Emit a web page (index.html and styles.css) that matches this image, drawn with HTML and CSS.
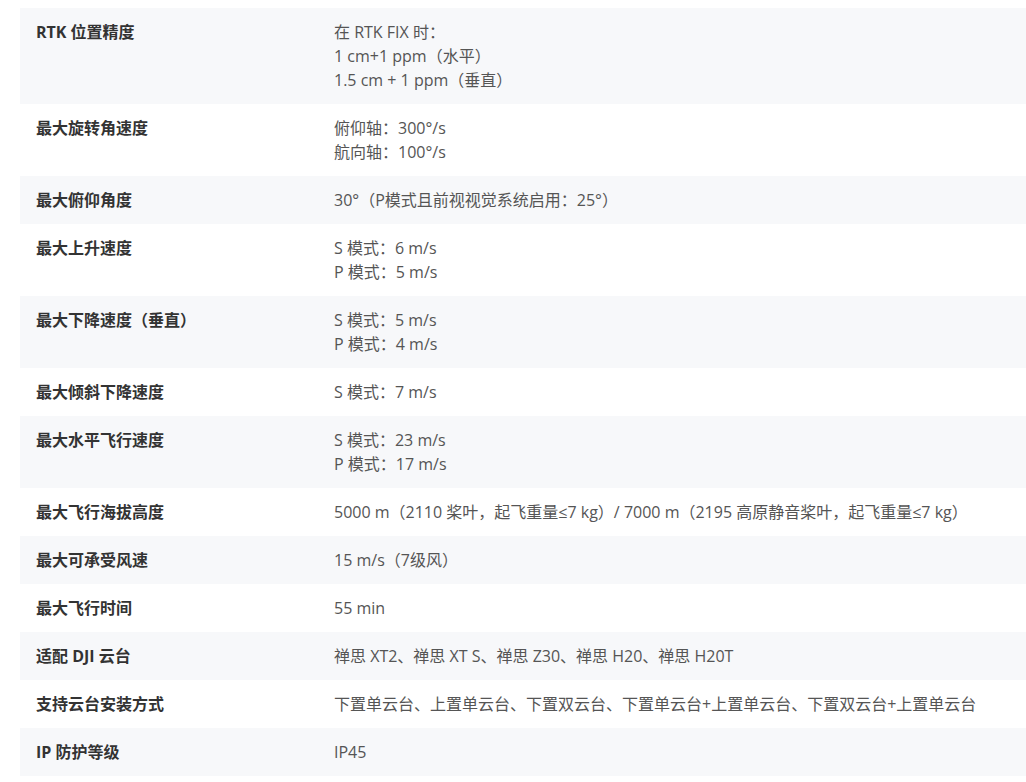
FILE: index.html
```html
<!DOCTYPE html>
<html lang="zh-CN">
<head>
<meta charset="utf-8">
<title>规格参数</title>
<link rel="stylesheet" href="styles.css">
</head>
<body>
<div class="wrap">
<table class="spec">
<tbody>
<tr><th>RTK 位置精度</th><td>在 RTK FIX 时：<br>1 cm+1 ppm（水平）<br>1.5 cm + 1 ppm（垂直）</td></tr>
<tr><th>最大旋转角速度</th><td>俯仰轴：300°/s<br>航向轴：100°/s</td></tr>
<tr><th>最大俯仰角度</th><td>30°（P模式且前视视觉系统启用：25°）</td></tr>
<tr><th>最大上升速度</th><td>S 模式：6 m/s<br>P 模式：5 m/s</td></tr>
<tr><th>最大下降速度（垂直）</th><td>S 模式：5 m/s<br>P 模式：4 m/s</td></tr>
<tr><th>最大倾斜下降速度</th><td>S 模式：7 m/s</td></tr>
<tr><th>最大水平飞行速度</th><td>S 模式：23 m/s<br>P 模式：17 m/s</td></tr>
<tr><th>最大飞行海拔高度</th><td>5000 m（2110 桨叶，起飞重量≤7 kg）/ 7000 m（2195 高原静音桨叶，起飞重量≤7 kg）</td></tr>
<tr><th>最大可承受风速</th><td>15 m/s（7级风）</td></tr>
<tr><th>最大飞行时间</th><td>55 min</td></tr>
<tr><th>适配 DJI 云台</th><td>禅思 XT2、禅思 XT S、禅思 Z30、禅思 H20、禅思 H20T</td></tr>
<tr><th>支持云台安装方式</th><td>下置单云台、上置单云台、下置双云台、下置单云台+上置单云台、下置双云台+上置单云台</td></tr>
<tr><th>IP 防护等级</th><td>IP45</td></tr>
</tbody>
</table>
</div>
</body>
</html>
```

FILE: styles.css
```css
html, body {
  margin: 0;
  padding: 0;
  background: #fff;
  overflow: hidden;
}
.wrap {
  padding: 8px 0 0 20px;
}
.spec {
  width: 1006px;
  border-collapse: collapse;
  font-family: "Open Sans", "Noto Sans CJK SC", sans-serif;
  font-size: 16px;
  line-height: 24px;
  text-spacing-trim: space-all;
}
.spec tr:nth-child(odd) {
  background: #f7f8fa;
}
.spec th,
.spec td {
  padding: 12px 16px;
  text-align: left;
  vertical-align: top;
}
.spec th {
  width: 266px;
  font-weight: 700;
  color: #333;
}
.spec td {
  font-weight: 400;
  color: #555;
}
```
